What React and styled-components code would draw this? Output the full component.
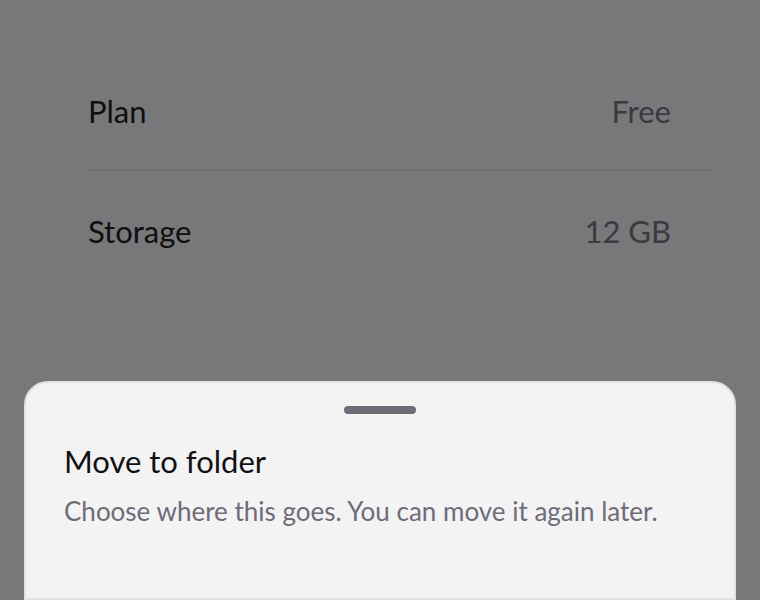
import styled, { createGlobalStyle } from "styled-components"

const Global = createGlobalStyle`
  html, body { margin: 0; height: 100%; }
  body {
    background: #f0f0f4;
    font-family: Lato, "Noto Sans", sans-serif;
    overflow: hidden;
  }
`

const Page = styled.main`
  padding: 53px 48px 0 88px;
`

const Row = styled.div`
  display: flex;
  align-items: center;
  justify-content: space-between;
  height: 116px;
  padding-right: 41px;
  font-size: 31px;
`

const Label = styled.span`
  color: #202022;
`

const Value = styled.span`
  color: #74747e;
`

const Divider = styled.hr`
  margin: 0 0 2px;
  border: 0;
  border-top: 2px solid #dcdce2;
`

const Scrim = styled.div`
  position: fixed;
  inset: 0;
  background: rgba(0, 0, 0, 0.5);
`

const Sheet = styled.section`
  position: fixed;
  left: 24px;
  right: 24px;
  top: 381px;
  bottom: 0;
  box-sizing: border-box;
  background: #f3f3f3;
  border: 2px solid #e2e2e4;
  border-radius: 24px 24px 0 0;
  padding: 23px 38px 0;
`

const Handle = styled.div`
  width: 72px;
  height: 8px;
  margin: 0 auto;
  border-radius: 4px;
  background: #6f6e78;
`

const Title = styled.h2`
  margin: 29px 0 0;
  font-size: 31px;
  font-weight: 400;
  line-height: 36px;
  color: #111114;
`

const Subtitle = styled.p`
  margin: 16px 0 0;
  font-size: 26px;
  line-height: 32px;
  color: #6e6c78;
`

export default function App() {
  return (
    <>
      <Global />
      <Page>
        <Row>
          <Label>Plan</Label>
          <Value>Free</Value>
        </Row>
        <Divider />
        <Row>
          <Label>Storage</Label>
          <Value>12 GB</Value>
        </Row>
      </Page>
      <Scrim />
      <Sheet>
        <Handle />
        <Title>Move to folder</Title>
        <Subtitle>Choose where this goes. You can move it again later.</Subtitle>
      </Sheet>
    </>
  )
}
